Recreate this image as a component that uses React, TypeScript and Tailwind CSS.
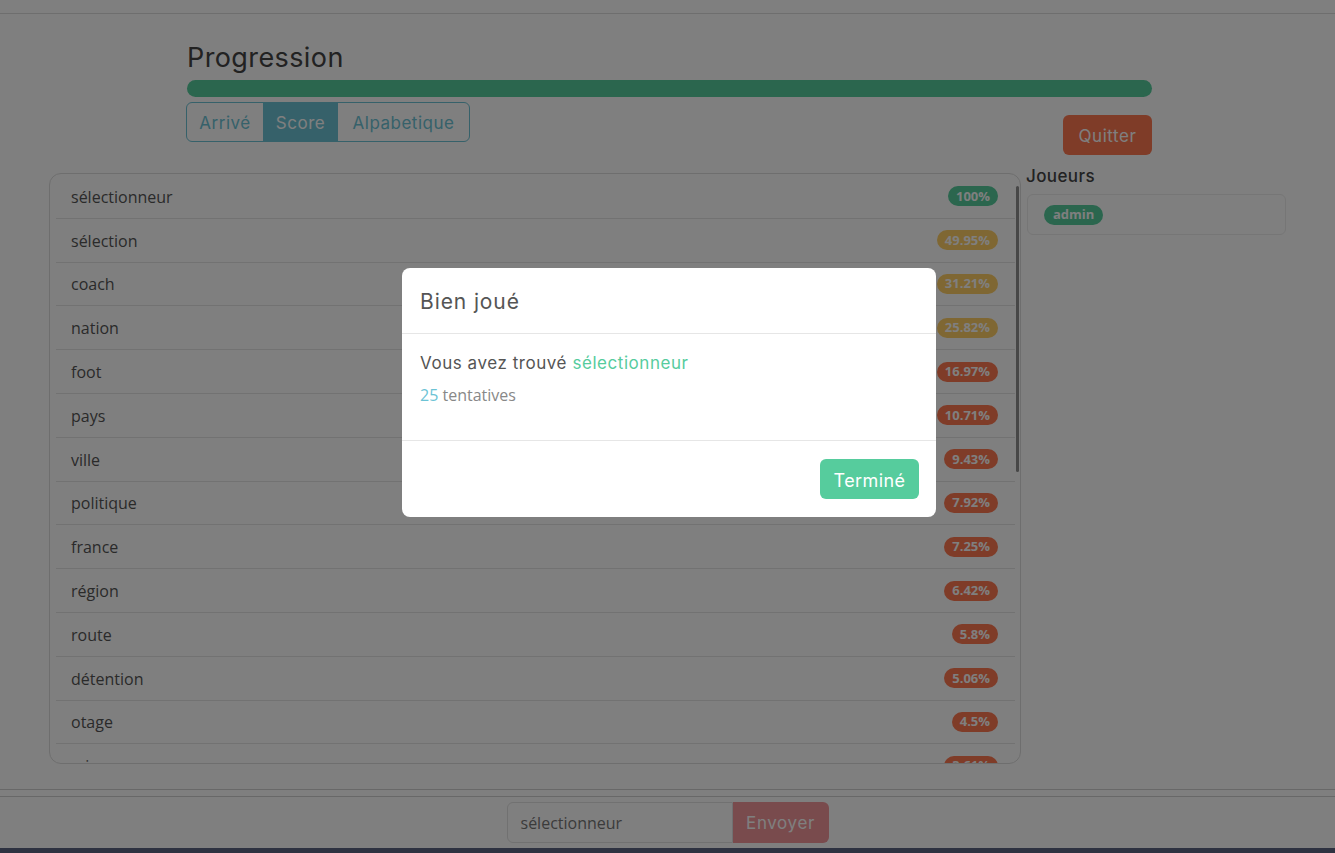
import React from "react";

const words: [string, string, "s" | "w" | "d"][] = [
  ["sélectionneur", "100%", "s"],
  ["sélection", "49.95%", "w"],
  ["coach", "31.21%", "w"],
  ["nation", "25.82%", "w"],
  ["foot", "16.97%", "d"],
  ["pays", "10.71%", "d"],
  ["ville", "9.43%", "d"],
  ["politique", "7.92%", "d"],
  ["france", "7.25%", "d"],
  ["région", "6.42%", "d"],
  ["route", "5.8%", "d"],
  ["détention", "5.06%", "d"],
  ["otage", "4.5%", "d"],
  ["crise", "3.61%", "d"],
  ["prison", "3.12%", "d"],
];

const badgeBg = { s: "bg-[#56cc9d]", w: "bg-[#ffce67]", d: "bg-[#ff7851]" };

const head = { fontFamily: "Inter, 'Noto Sans', sans-serif" };
const body = { fontFamily: "'Open Sans', 'Noto Sans', sans-serif" };

export default function App() {
  return (
    <div className="relative h-[853px] overflow-hidden bg-white flex flex-col text-[#5a5a5a]" style={body}>
      <div className="h-[14px] border-b border-[#dcdcdc] shrink-0" />
      <div className="w-[965px] ml-[187px] shrink-0">
        <h3 className="text-[27px] tracking-[0.4px] leading-none mt-[30px] text-[#444]" style={head}>Progression</h3>
        <div className="mt-[9px] h-[17px] rounded-full bg-[#56cc9d]" />
        <div className="flex justify-between items-start mt-[5px]">
          <div className="flex h-[40px] rounded-[6px] border border-[#6cc3d5] overflow-hidden text-[17px] tracking-[0.5px] -ml-[1px]" style={head}>
            <div className="w-[76px] flex items-center justify-center pt-[4px] text-[#6cc3d5]">Arrivé</div>
            <div className="w-[75px] flex items-center justify-center pt-[4px] bg-[#6cc3d5] text-white">Score</div>
            <div className="w-[131px] flex items-center justify-center pt-[4px] text-[#6cc3d5]">Alpabetique</div>
          </div>
          <div className="mt-[13px] w-[89px] h-[40px] rounded-[6px] bg-[#ff7851] text-white text-[17px] tracking-[0.6px] flex items-center justify-center pt-[3px]" style={head}>Quitter</div>
        </div>
      </div>
      <div className="w-[1237px] mx-auto flex gap-[5px] mt-[18px] shrink-0">
        <div className="w-[972px] h-[591px] rounded-[12px] border border-[#dcdcdc] pl-[6px] pt-[1px] overflow-hidden flex">
          <div className="flex-1 h-full overflow-hidden">
            {words.map(([w, p, k]) => (
              <div key={w} className="h-[43.8px] border-b border-[#e4e4e4] flex items-center justify-between pl-[15px] pr-[17px] text-[16px]">
                <span className="text-[#555] pt-[1px]">{w}</span>
                <span className={`${badgeBg[k]} text-white font-bold text-[13px] rounded-full px-[8px] h-[20px] flex items-center leading-none`}>{p}</span>
              </div>
            ))}
          </div>
          <div className="w-[5px] pt-[11px] flex justify-start">
            <div className="w-[3px] h-[286px] ml-[1px] bg-[#8f8f8f] rounded-full" />
          </div>
        </div>
        <div className="w-[260px]">
          <div className="text-[17px] tracking-[0.4px] font-medium text-[#444] leading-none mt-[-5px]" style={head}>Joueurs</div>
          <div className="mt-[9px] ml-[1px] h-[41px] rounded-[6px] border border-[#ececec] flex items-center pl-[16px]">
            <span className="bg-[#56cc9d] text-white font-bold text-[13px] rounded-full px-[9px] h-[20px] flex items-center leading-none">admin</span>
          </div>
        </div>
      </div>
      <div className="mt-[25px] border-t border-[#d0d0d0] shrink-0" />
      <div className="mt-[6px] border-t border-[#d0d0d0] shrink-0" />
      <div className="flex justify-center mt-[5px] shrink-0">
        <div className="w-[226px] h-[41px] border border-[#e2e2e2] rounded-l-[6px] flex items-center pl-[13px] text-[16px] text-[#777]">sélectionneur</div>
        <div className="w-[96px] h-[41px] bg-[#f3969a] rounded-r-[6px] text-white text-[17px] tracking-[0.6px] flex items-center justify-center pt-[3px]" style={head}>Envoyer</div>
      </div>
      <div className="mt-auto h-[5px] bg-[#5c6482] shrink-0" />

      <div className="fixed inset-0 bg-black/50 z-40" />
      <div className="fixed inset-0 z-50 flex justify-center pt-[268px] pl-[3px]">
        <div className="w-[534px] h-[249px] bg-white rounded-[8px] flex flex-col">
          <div className="h-[66px] border-b border-[#e6e6e6] flex items-center px-[18px] pt-[2px]">
            <span className="text-[21px] tracking-[0.9px] text-[#555]" style={head}>Bien joué</span>
          </div>
          <div className="h-[107px] border-b border-[#e6e6e6] px-[18px] pt-[17px]">
            <div className="text-[17px] tracking-[0.55px] text-[#555]" style={head}>Vous avez trouvé <span className="text-[#56cc9d]">sélectionneur</span></div>
            <div className="mt-[6px] text-[16px] text-[#888]"><span className="text-[#6cc3d5]">25</span> tentatives</div>
          </div>
          <div className="flex-1 flex justify-end items-center px-[17px]">
            <div className="w-[99px] h-[40px] rounded-[6px] bg-[#56cc9d] text-white text-[18px] tracking-[0.4px] flex items-center justify-center pt-[2px]" style={head}>Terminé</div>
          </div>
        </div>
      </div>
    </div>
  );
}
